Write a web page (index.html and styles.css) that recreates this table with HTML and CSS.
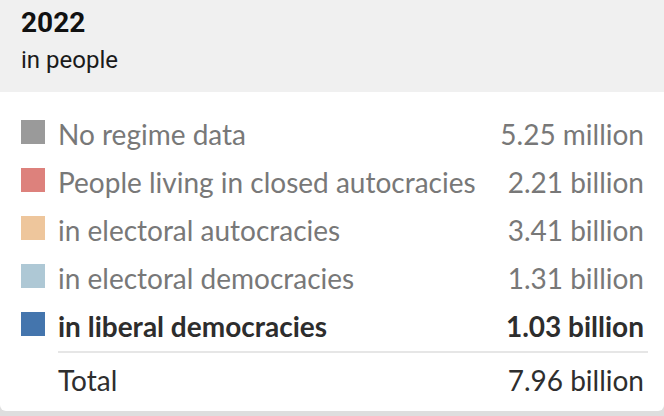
FILE: index.html
```html
<!DOCTYPE html>
<html>
<head>
<meta charset="utf-8">
<link rel="stylesheet" href="styles.css">
</head>
<body>
<div class="card">
  <div class="header">
    <div class="title">2022</div>
    <div class="subtitle">in people</div>
  </div>
  <div class="rows">
    <div class="row">
      <span class="swatch sw-none"></span>
      <span class="label">No regime data</span>
      <span class="value">5.25 million</span>
    </div>
    <div class="row">
      <span class="swatch sw-closed"></span>
      <span class="label">People living in closed autocracies</span>
      <span class="value">2.21 billion</span>
    </div>
    <div class="row">
      <span class="swatch sw-elauto"></span>
      <span class="label">in electoral autocracies</span>
      <span class="value">3.41 billion</span>
    </div>
    <div class="row">
      <span class="swatch sw-eldem"></span>
      <span class="label">in electoral democracies</span>
      <span class="value">1.31 billion</span>
    </div>
    <div class="row row-focus">
      <span class="swatch sw-libdem"></span>
      <span class="label">in liberal democracies</span>
      <span class="value">1.03 billion</span>
    </div>
    <div class="divider"></div>
    <div class="row row-total">
      <span class="swatch-space"></span>
      <span class="label">Total</span>
      <span class="value">7.96 billion</span>
    </div>
  </div>
</div>
</body>
</html>
```

FILE: styles.css
```css
html, body {
  margin: 0;
  padding: 0;
}
body {
  width: 664px;
  height: 416px;
  background: #dedede;
  overflow: hidden;
}
.card {
  width: 664px;
  height: 411px;
  background: #ffffff;
  border-radius: 0 0 6px 6px;
  overflow: hidden;
}
.header {
  height: 92px;
  box-sizing: border-box;
  background: #f0f0f0;
  padding: 6px 21px 0 21px;
  font-family: Roboto, "Liberation Sans", sans-serif;
  color: #111;
}
.title {
  font-size: 28px;
  font-weight: 700;
  line-height: 34px;
}
.subtitle {
  margin-top: 5px;
  font-size: 24px;
  line-height: 30px;
  color: #1a1a1a;
}
.rows {
  padding: 18px 20px 0 21px;
  font-family: Lato, "Liberation Sans", sans-serif;
  font-size: 28px;
}
.row {
  display: flex;
  align-items: flex-start;
  height: 48px;
  line-height: 48px;
  color: #787878;
}
.swatch, .swatch-space {
  flex: none;
  width: 24px;
  height: 24px;
  margin-top: 10px;
  margin-right: 13px;
}
.sw-none { background: #9a9a9a; }
.sw-closed { background: #dd817c; }
.sw-elauto { background: #eec69c; }
.sw-eldem { background: #aec8d5; }
.sw-libdem { background: #4475ad; }
.label {
  flex: 1;
  white-space: nowrap;
}
.value {
  flex: none;
  text-align: right;
  white-space: nowrap;
}
.row-focus {
  color: #2d2d2d;
  font-weight: 700;
}
.divider {
  height: 2px;
  background: #e6e6e6;
  margin: 1px -4px 0 37px;
}
.row-total {
  margin-top: 3px;
  color: #2e2e2e;
}
```
